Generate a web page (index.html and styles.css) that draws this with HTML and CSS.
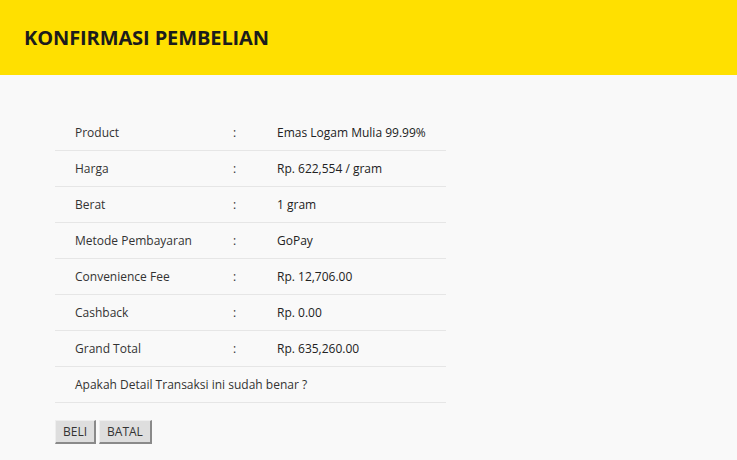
FILE: index.html
```html
<!DOCTYPE html>
<html>
<head>
<meta charset="utf-8">
<link rel="stylesheet" href="styles.css">
</head>
<body>
<header class="topbar"><h1 class="title">KONFIRMASI PEMBELIAN</h1></header>
<main class="content">
  <table class="detail">
    <tr><td class="lbl">Product</td><td class="sep">:</td><td class="val">Emas Logam Mulia 99.99%</td></tr>
    <tr><td class="lbl">Harga</td><td class="sep">:</td><td class="val">Rp. 622,554 / gram</td></tr>
    <tr><td class="lbl">Berat</td><td class="sep">:</td><td class="val">1 gram</td></tr>
    <tr><td class="lbl">Metode Pembayaran</td><td class="sep">:</td><td class="val">GoPay</td></tr>
    <tr><td class="lbl">Convenience Fee</td><td class="sep">:</td><td class="val">Rp. 12,706.00</td></tr>
    <tr><td class="lbl">Cashback</td><td class="sep">:</td><td class="val">Rp. 0.00</td></tr>
    <tr><td class="lbl">Grand Total</td><td class="sep">:</td><td class="val">Rp. 635,260.00</td></tr>
    <tr><td class="lbl" colspan="3">Apakah Detail Transaksi ini sudah benar ?</td></tr>
  </table>
  <div class="actions">
    <button class="btn">BELI</button>
    <button class="btn">BATAL</button>
  </div>
</main>
</body>
</html>
```
FILE: styles.css
```css
html, body { margin: 0; padding: 0; }
body {
  background: #f9f9f9;
  font-family: "Open Sans", "DejaVu Sans", sans-serif;
  color: #333;
  width: 737px;
  height: 460px;
  overflow: hidden;
}
.topbar {
  background: #ffe000;
  height: 75px;
  display: flex;
  align-items: center;
  padding: 0 24px;
  box-sizing: border-box;
}
.title {
  margin: 0;
  font-size: 20px;
  font-weight: 700;
  color: #1c1c1c;
  letter-spacing: -0.1px;
}
.content {
  padding: 40px 55px 0;
}
.detail {
  border-collapse: collapse;
  width: 391px;
  font-size: 12px;
  table-layout: fixed;
}
.detail td {
  height: 35px;
  padding: 0;
  border-bottom: 1px solid #e6e6e6;
  vertical-align: middle;
}
.lbl { padding-left: 20px !important; }
.detail tr:first-child .lbl { width: 158px; }
.detail tr:first-child .sep { width: 44px; }
.val { color: #222; }
.actions {
  display: flex;
  gap: 3px;
  margin-top: 17px;
}
.btn {
  font-family: "Open Sans", "DejaVu Sans", sans-serif;
  font-size: 12px;
  color: #333;
  background: #dedede;
  border: none;
  border-right: 2px solid #8a8a8a;
  border-bottom: 2px solid #8a8a8a;
  border-top: 1px solid #eee;
  border-left: 1px solid #eee;
  padding: 2px 7px 2px 7px;
  height: 24px;
  box-sizing: border-box;
  line-height: 18px;
}
```
